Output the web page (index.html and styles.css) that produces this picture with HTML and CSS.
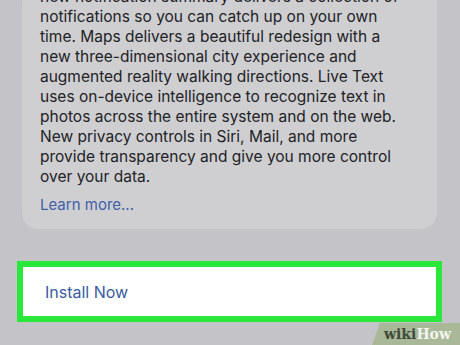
FILE: index.html
```html
<!DOCTYPE html>
<html>
<head>
<meta charset="utf-8">
<link rel="stylesheet" href="styles.css">
</head>
<body>
<div class="screen">
  <div class="card">
    <p class="desc">new notification summary delivers a collection of<br>notifications so you can catch up on your own<br>time. Maps delivers a beautiful redesign with a<br>new three-dimensional city experience and<br>augmented reality walking directions. Live Text<br>uses on-device intelligence to recognize text in<br>photos across the entire system and on the web.<br>New privacy controls in Siri, Mail, and more<br>provide transparency and give you more control<br>over your data.</p>
    <a class="learn">Learn more...</a>
  </div>
  <div class="install">
    <span class="install-label">Install Now</span>
  </div>
  <div class="wm"><span class="wm-wiki">wiki</span><span class="wm-how">How</span></div>
</div>
</body>
</html>
```
FILE: styles.css
```css
html, body {
  margin: 0;
  padding: 0;
}
body {
  width: 460px;
  height: 345px;
  overflow: hidden;
  background: #c4c4c8;
  font-family: Inter, "Noto Sans", sans-serif;
}
.screen {
  position: relative;
  width: 460px;
  height: 345px;
  overflow: hidden;
}
.card {
  margin: -13px 0 0 22px;
  width: 415px;
  box-sizing: border-box;
  padding: 0 18px 14px 18px;
  background: #cfcfd2;
  border-radius: 16px;
}
.desc {
  margin: 0;
  font-size: 15.5px;
  line-height: 20px;
  color: #222225;
  white-space: nowrap;
}
.learn {
  display: block;
  margin-top: 8px;
  font-size: 15px;
  line-height: 20px;
  color: #3f5ea6;
}
.install {
  margin: 32px 0 0 17px;
  width: 425px;
  height: 61px;
  box-sizing: border-box;
  border: 6px solid #2ae83b;
  background: #ffffff;
  display: flex;
  align-items: center;
  padding-left: 22px;
}
.install-label {
  font-size: 16px;
  color: #3a5a9e;
}
.wm {
  position: absolute;
  right: 0;
  bottom: 0;
  width: 76px;
  height: 22px;
  padding-left: 12px;
  background: #a8b899;
  clip-path: polygon(8px 0, 100% 0, 100% 100%, 0 100%);
  font-family: "DejaVu Serif", "Liberation Serif", serif;
  font-weight: bold;
  font-size: 14px;
  line-height: 22px;
}
.wm-wiki {
  color: #3f4a3a;
}
.wm-how {
  color: #f2f4ee;
}
```
